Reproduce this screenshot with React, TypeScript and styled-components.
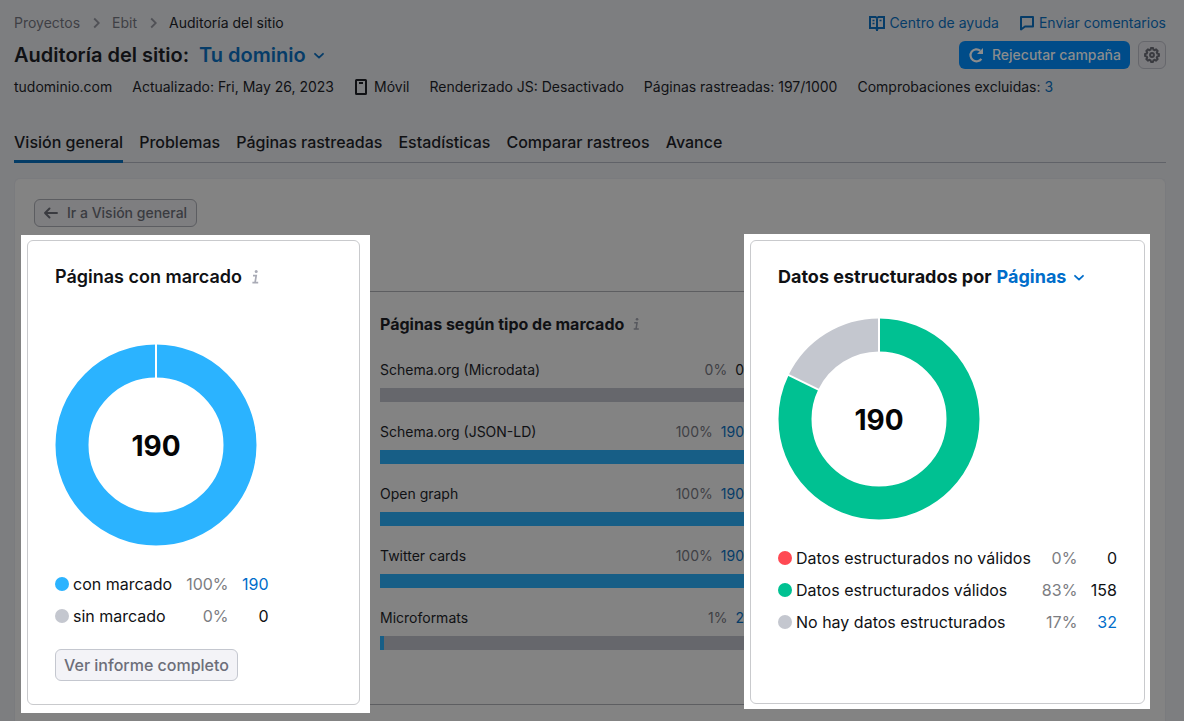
import React from "react";
import styled, { createGlobalStyle } from "styled-components";

const GlobalStyle = createGlobalStyle`
  * { box-sizing: border-box; }
  body {
    margin: 0;
    background: #7d7e80;
    color: #101114;
    font-family: Inter, "Liberation Sans", sans-serif;
    font-size: 14px;
    line-height: 20px;
  }
  a { color: inherit; text-decoration: none; }
  button { font: inherit; cursor: pointer; }
  h1, h2, ul, ol { margin: 0; padding: 0; list-style: none; }
  svg { display: block; flex: none; }
`;

const Page = styled.div`
  display: flex;
  flex-direction: column;
  min-height: 100vh;
  padding: 7px 18px 0 14px;
`;

const HeaderRow = styled.div`
  display: flex;
  align-items: center;
  justify-content: space-between;
  height: 32px;
`;

const Breadcrumbs = styled.ol`
  display: flex;
  align-items: center;
  gap: 12px;
`;

const Crumb = styled.li<{ $current?: boolean }>`
  display: flex;
  align-items: center;
  gap: 12px;
  color: ${(p) => (p.$current ? "#101114" : "#3f4045")};
`;

const HelpLinks = styled.div`
  display: flex;
  gap: 20px;
`;

const HelpLink = styled.a`
  display: flex;
  align-items: center;
  gap: 4px;
  && { color: #063c68; }
`;

const Title = styled.h1`
  display: flex;
  align-items: center;
  gap: 10px;
  font-size: 20px;
  line-height: 28px;
  font-weight: 600;
`;

const PickerButton = styled.button<{ $color: string }>`
  display: flex;
  align-items: center;
  gap: 7px;
  padding: 0;
  border: 0;
  background: none;
  color: ${(p) => p.$color};
`;

const Actions = styled.div`
  display: flex;
  gap: 8px;
`;

const PrimaryButton = styled.button`
  display: flex;
  align-items: center;
  gap: 8px;
  height: 28px;
  padding: 0 9px;
  border: 0;
  border-radius: 6px;
  background: #004c89;
  color: #8b8c8d;
  font-weight: 500;
`;

const IconButton = styled.button`
  display: grid;
  place-items: center;
  width: 28px;
  height: 28px;
  padding: 0;
  border: 1px solid #66676c;
  border-radius: 6px;
  background: #7b7b7e;
  color: #3a3b40;
`;

const Meta = styled.ul`
  display: flex;
  align-items: center;
  gap: 20px;
  height: 32px;
`;

const MetaItem = styled.li`
  display: flex;
  align-items: center;
  gap: 4px;
  a { color: #063c68; }
`;

const Tabs = styled.nav`
  display: flex;
  gap: 16px;
  margin-top: 21px;
  border-bottom: 1px solid #606268;
`;

const Tab = styled.a<{ $active?: boolean }>`
  margin-bottom: -1px;
  padding: 8px 0;
  border-bottom: 3px solid ${(p) => (p.$active ? "#043c66" : "transparent")};
  font-size: 16px;
  line-height: 20px;
  font-weight: 500;
`;

const Panel = styled.main`
  flex: 1;
  margin-top: 15px;
  padding: 20px 15px 7px 6px;
  border: 1px solid #7a7b7e;
  border-bottom: 0;
  border-radius: 6px 6px 0 0;
  background: #838383;
`;

const BackButton = styled.button`
  display: flex;
  align-items: center;
  gap: 8px;
  height: 28px;
  margin-left: 13px;
  padding: 0 9px;
  border: 1px solid #5c5d61;
  border-radius: 6px;
  background: #7e7e80;
  color: #3a3b40;
  font-weight: 500;
`;

const Widgets = styled.div`
  display: grid;
  grid-template-columns: 349px minmax(0, 1fr) 406px;
  align-items: start;
  margin-top: 7px;
`;

const Spotlight = styled.div<{ $height: number; $pad: string; $top?: number }>`
  display: flex;
  min-height: ${(p) => p.$height}px;
  margin-top: ${(p) => p.$top ?? 0}px;
  padding: ${(p) => p.$pad};
  background: #fff;
`;

const Card = styled.section`
  flex: 1;
  padding: 24px 27px 22px;
  border: 1px solid #c9cacd;
  border-radius: 6px;
`;

const CardTitle = styled.h2<{ $bold?: boolean }>`
  display: flex;
  align-items: center;
  gap: 5px;
  font-size: 18px;
  line-height: 24px;
  font-weight: ${(p) => (p.$bold ? 700 : 600)};
`;

const DonutSvg = styled.svg<{ $top: number }>`
  margin-top: ${(p) => p.$top}px;
`;

const DonutTotal = styled.text`
  font-size: 28px;
  font-weight: 700;
  text-anchor: middle;
  fill: #050506;
`;

const Legend = styled.table<{ $gap: number }>`
  margin-top: 22px;
  border-collapse: collapse;
  font-size: 16px;
  line-height: 24px;
  th, td { height: 32px; padding: 0; font-weight: 400; }
  td { text-align: right; white-space: nowrap; }
  td:nth-child(2) { padding-left: ${(p) => p.$gap}px; color: #7c7d82; }
  td:last-child { width: 40px; }
  td:last-child a { color: #006dca; }
`;

const LegendLabel = styled.span<{ $dot: string }>`
  display: flex;
  align-items: center;
  gap: 4px;
  white-space: nowrap;
  &::before {
    content: "";
    width: 14px;
    height: 14px;
    border-radius: 50%;
    background: ${(p) => p.$dot};
  }
`;

const ReportButton = styled.button`
  height: 32px;
  margin-top: 17px;
  padding: 0 8px;
  border: 1px solid #c4c7cf;
  border-radius: 6px;
  background: #f3f3f7;
  color: #6c6e79;
  font-size: 16px;
  font-weight: 500;
`;

const TypesCard = styled.section`
  min-height: 414px;
  margin-top: 57px;
  padding: 22px 0 0 10px;
  border-top: 1px solid #5d5e61;
  border-bottom: 1px solid #5d5e61;
`;

const TypesTitle = styled(CardTitle)`
  font-size: 16px;
  line-height: 20px;
`;

const TypeList = styled.ul`
  display: flex;
  flex-direction: column;
  gap: 18px;
  margin-top: 24px;
`;

const TypeHead = styled.div`
  display: flex;
  gap: 8px;
  height: 30px;
  line-height: 24px;
`;

const TypeName = styled.span`
  flex: 1;
`;

const Muted = styled.span`
  color: #3f4045;
`;

const TypeCount = styled.a`
  && { color: #063c68; }
`;

const Track = styled.div`
  height: 14px;
  background: #66676c;
`;

const Fill = styled.div`
  height: 100%;
  background: #175e86;
`;

const Chevron = () => (
  <svg width="12" height="12" viewBox="0 0 12 12" fill="none" stroke="currentColor" strokeWidth="1.800" strokeLinecap="round" strokeLinejoin="round">
    <path d="M2 4.800l4 3.800 4-3.800" />
  </svg>
);

const CrumbArrow = () => (
  <svg width="8" height="12" viewBox="0 0 8 12" fill="none" stroke="#505156" strokeWidth="1.800">
    <path d="M2.200 1.500L6.800 6l-4.600 4.500" />
  </svg>
);

const Info = ({ color, size }: { color: string; size: number }) => (
  <svg width={size} height={size} viewBox="0 0 16 16" fill="none" stroke={color} strokeWidth="1.700">
    <circle cx="9.200" cy="2.600" r="1.500" fill={color} stroke="none" />
    <path d="M6 6.600h3.200L8.100 13.400M5.400 13.700h5.800" />
  </svg>
);

const BookIcon = () => (
  <svg width="16" height="16" viewBox="0 0 16 16" fill="none" stroke="currentColor" strokeWidth="2">
    <path d="M1 2h5.500L8 3l1.500-1H15v11H9.500L8 14.200 6.500 13H1zM8 3v13" />
    <path d="M3.500 5.500h2M3.500 8.500h2M10.500 5.500h2" strokeWidth="1.400" />
  </svg>
);

const CommentIcon = () => (
  <svg width="16" height="16" viewBox="0 0 16 16" fill="none" stroke="currentColor" strokeWidth="2" strokeLinejoin="round">
    <path d="M2 2h12v9.500H6L2 14.500z" />
  </svg>
);

const ReloadIcon = () => (
  <svg width="16" height="16" viewBox="0 0 16 16" fill="none" stroke="currentColor" strokeWidth="2.200">
    <path d="M13.400 11.800A6 6 0 1 1 12.200 3.600" />
    <path d="M15 1v6H9l2.200-2.200z" fill="currentColor" stroke="none" />
  </svg>
);

const gearPath = (() => {
  const points: string[] = [];
  for (let tooth = 0; tooth < 8; tooth++) {
    for (const [offset, radius] of [[-15, 5.5], [-9, 7], [9, 7], [15, 5.5]]) {
      const angle = ((tooth * 45 + offset) * Math.PI) / 180;
      points.push(`${(8 + radius * Math.sin(angle)).toFixed(2)} ${(8 - radius * Math.cos(angle)).toFixed(2)}`);
    }
  }
  return `M${points.join("L")}Z`;
})();

const GearIcon = () => (
  <svg width="16" height="16" viewBox="0 0 16 16" fill="none" stroke="currentColor" strokeWidth="2" strokeLinejoin="round">
    <path d={gearPath} />
    <circle cx="8" cy="8" r="1.900" />
  </svg>
);

const PhoneIcon = () => (
  <svg width="16" height="16" viewBox="0 0 16 16" fill="none" stroke="currentColor" strokeWidth="2">
    <rect x="2" y="1" width="10" height="14" rx=".5" />
    <path d="M5 4h4" />
  </svg>
);

const BackIcon = () => (
  <svg width="15" height="12" viewBox="0 0 15 12" fill="none" stroke="currentColor" strokeWidth="1.900" strokeLinecap="round" strokeLinejoin="round">
    <path d="M13 6H1M5.500 1.500L1 6l4.500 4.500" />
  </svg>
);

type Slice = { color: string; share: number };

const Donut = ({ slices, top }: { slices: Slice[]; top: number }) => {
  const point = (share: number, radius: number) => {
    const angle = share * Math.PI * 2;
    return `${101 + radius * Math.sin(angle)} ${101 - radius * Math.cos(angle)}`;
  };
  let start = 0;
  const cuts: number[] = [];
  return (
    <DonutSvg $top={top} width="202" height="202" viewBox="0 0 202 202" role="img" aria-label="190 páginas">
      {slices.map((s) => {
        const from = start;
        start += s.share;
        cuts.push(from);
        return (
          <circle
            key={s.color}
            cx="101"
            cy="101"
            r="84"
            fill="none"
            stroke={s.color}
            strokeWidth="33"
            pathLength={100}
            strokeDasharray={`${s.share * 100} 100`}
            transform={`rotate(${from * 360 - 90} 101 101)`}
          />
        );
      })}
      {cuts.map((c) => (
        <path key={c} d={`M${point(c, 64)}L${point(c, 102)}`} stroke="#fff" strokeWidth="2" />
      ))}
      <DonutTotal x="101" y="112">190</DonutTotal>
    </DonutSvg>
  );
};

type Row = { label: string; dot: string; pct: string; count: string; link?: boolean };

const LegendTable = ({ rows, gap }: { rows: Row[]; gap: number }) => (
  <Legend $gap={gap}>
    <tbody>
      {rows.map((r) => (
        <tr key={r.label}>
          <th scope="row"><LegendLabel $dot={r.dot}>{r.label}</LegendLabel></th>
          <td>{r.pct}</td>
          <td>{r.link ? <a href="#paginas">{r.count}</a> : r.count}</td>
        </tr>
      ))}
    </tbody>
  </Legend>
);

const tabs = ["Visión general", "Problemas", "Páginas rastreadas", "Estadísticas", "Comparar rastreos", "Avance"];

const types = [
  { name: "Schema.org (Microdata)", pct: 0, count: 0 },
  { name: "Schema.org (JSON-LD)", pct: 100, count: 190 },
  { name: "Open graph", pct: 100, count: 190 },
  { name: "Twitter cards", pct: 100, count: 190 },
  { name: "Microformats", pct: 1, count: 2 },
];

export default function App() {
  return (
    <Page>
      <GlobalStyle />
      <header>
        <HeaderRow>
          <Breadcrumbs>
            <Crumb><a href="#proyectos">Proyectos</a><CrumbArrow /></Crumb>
            <Crumb><a href="#ebit">Ebit</a><CrumbArrow /></Crumb>
            <Crumb $current>Auditoría del sitio</Crumb>
          </Breadcrumbs>
          <HelpLinks>
            <HelpLink href="#ayuda"><BookIcon />Centro de ayuda</HelpLink>
            <HelpLink href="#comentarios"><CommentIcon />Enviar comentarios</HelpLink>
          </HelpLinks>
        </HeaderRow>
        <HeaderRow>
          <Title>
            Auditoría del sitio:
            <PickerButton $color="#063c68">Tu dominio<Chevron /></PickerButton>
          </Title>
          <Actions>
            <PrimaryButton><ReloadIcon />Rejecutar campaña</PrimaryButton>
            <IconButton aria-label="Configuración"><GearIcon /></IconButton>
          </Actions>
        </HeaderRow>
        <Meta>
          <MetaItem>tudominio.com</MetaItem>
          <MetaItem>Actualizado: Fri, May 26, 2023</MetaItem>
          <MetaItem><PhoneIcon />Móvil</MetaItem>
          <MetaItem>Renderizado JS: Desactivado</MetaItem>
          <MetaItem>Páginas rastreadas: 197/1000</MetaItem>
          <MetaItem>Comprobaciones excluidas: <a href="#excluidas">3</a></MetaItem>
        </Meta>
        <Tabs>
          {tabs.map((t, i) => (
            <Tab key={t} href="#tab" $active={i === 0}>{t}</Tab>
          ))}
        </Tabs>
      </header>
      <Panel>
        <BackButton><BackIcon />Ir a Visión general</BackButton>
        <Widgets>
          <Spotlight $height={478} $top={1} $pad="5px 10px 8px 6px">
            <Card>
              <CardTitle>Páginas con marcado <Info color="#a9abb6" size={16} /></CardTitle>
              <Donut top={55} slices={[{ color: "#2bb3ff", share: 1 }]} />
              <LegendTable
                gap={14}
                rows={[
                  { label: "con marcado", dot: "#2bb3ff", pct: "100%", count: "190", link: true },
                  { label: "sin marcado", dot: "#c4c7cf", pct: "0%", count: "0" },
                ]}
              />
              <ReportButton>Ver informe completo</ReportButton>
            </Card>
          </Spotlight>
          <TypesCard>
            <TypesTitle $bold>Páginas según tipo de marcado <Info color="#57585e" size={14} /></TypesTitle>
            <TypeList>
              {types.map((t) => (
                <li key={t.name}>
                  <TypeHead>
                    <TypeName>{t.name}</TypeName>
                    <Muted>{t.pct}%</Muted>
                    {t.count ? <TypeCount href="#tipo">{t.count}</TypeCount> : <span>0</span>}
                  </TypeHead>
                  <Track><Fill style={{ width: `${t.pct}%` }} /></Track>
                </li>
              ))}
            </TypeList>
          </TypesCard>
          <Spotlight $height={475} $pad="6px 5px 5px 6px">
            <Card>
              <CardTitle $bold>
                Datos estructurados por
                <PickerButton $color="#006dca">Páginas<Chevron /></PickerButton>
              </CardTitle>
              <Donut
                top={29}
                slices={[
                  { color: "#00c192", share: 0.822 },
                  { color: "#c4c7cf", share: 0.178 },
                ]}
              />
              <LegendTable
                gap={11}
                rows={[
                  { label: "Datos estructurados no válidos", dot: "#ff4953", pct: "0%", count: "0" },
                  { label: "Datos estructurados válidos", dot: "#00c192", pct: "83%", count: "158" },
                  { label: "No hay datos estructurados", dot: "#c4c7cf", pct: "17%", count: "32", link: true },
                ]}
              />
            </Card>
          </Spotlight>
        </Widgets>
      </Panel>
    </Page>
  );
}
